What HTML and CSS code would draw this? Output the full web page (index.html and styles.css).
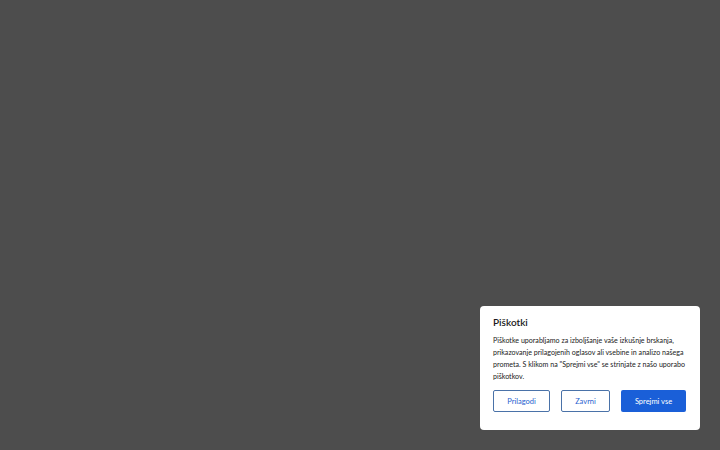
FILE: index.html
```html
<!DOCTYPE html>
<html lang="sl">
<head>
<meta charset="utf-8">
<link rel="stylesheet" href="styles.css">
</head>
<body>
<div class="cookie">
  <h2 class="cookie-title">Piškotki</h2>
  <p class="cookie-text">Piškotke uporabljamo za izboljšanje vaše izkušnje brskanja, prikazovanje prilagojenih oglasov ali vsebine in analizo našega prometa. S klikom na "Sprejmi vse" se strinjate z našo uporabo piškotkov.</p>
  <div class="cookie-actions">
    <button class="btn btn-outline btn-custom">Prilagodi</button>
    <button class="btn btn-outline btn-reject">Zavrni</button>
    <button class="btn btn-primary">Sprejmi vse</button>
  </div>
</div>
</body>
</html>
```
FILE: styles.css
```css
html, body {
  margin: 0;
  padding: 0;
  height: 100%;
}
body {
  background: #4d4d4d;
  font-family: Lato, "Open Sans", sans-serif;
}
.cookie {
  position: fixed;
  right: 20px;
  bottom: 20px;
  width: 220px;
  box-sizing: border-box;
  background: #ffffff;
  border-radius: 4px;
  padding: 10px 14px 18px 13px;
  color: #212121;
}
.cookie-title {
  margin: 0;
  font-size: 10px;
  font-weight: 600;
  line-height: 13px;
  color: #1a1a1a;
}
.cookie-text {
  margin: 6px 0 0;
  font-size: 7.1px;
  line-height: 12px;
  color: #222;
}
.cookie-actions {
  display: flex;
  justify-content: space-between;
  margin-top: 7px;
}
.btn {
  height: 22px;
  box-sizing: border-box;
  font-family: Lato, sans-serif;
  font-size: 7.5px;
  border-radius: 2px;
  padding: 0;
  cursor: pointer;
}
.btn-outline {
  background: #fff;
  border: 1.5px solid #4a72a8;
  color: #1f5fcf;
}
.btn-custom { width: 57px; }
.btn-reject { width: 49px; }
.btn-primary {
  width: 65px;
  background: #1a5fd8;
  border: none;
  color: #fff;
}
```
